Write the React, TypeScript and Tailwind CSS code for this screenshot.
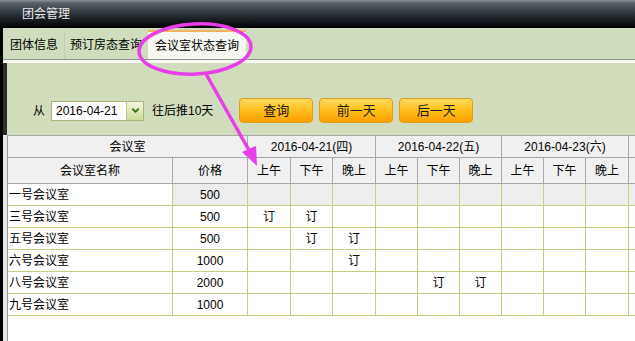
import { ChevronDown } from "lucide-react";

const cols = "grid-cols-[165px_75px_43px_42px_43px_42px_42px_42px_42px_42px_43px_60px]";

interface Sala {
  nome: string;
  preco: string;
  ocupado: number[];
}

const salas: Sala[] = [
  { nome: "一号会议室", preco: "500", ocupado: [] },
  { nome: "三号会议室", preco: "500", ocupado: [0, 1] },
  { nome: "五号会议室", preco: "500", ocupado: [1, 2] },
  { nome: "六号会议室", preco: "1000", ocupado: [2] },
  { nome: "八号会议室", preco: "2000", ocupado: [4, 5] },
  { nome: "九号会议室", preco: "1000", ocupado: [] },
];

const periodos = ["上午", "下午", "晚上", "上午", "下午", "晚上", "上午", "下午", "晚上"];

function Botao({ texto }: { texto: string }) {
  return (
    <button className="w-[74px] h-[25px] shrink-0 rounded-[4px] border border-[#e49a22] bg-[linear-gradient(to_bottom,#ffdc60_0%,#ffc21e_45%,#ff9f00_100%)] text-[13px] text-[#1a1a1a] flex items-center justify-center">
      {texto}
    </button>
  );
}

function App() {
  return (
    <div className="relative w-[635px] h-[341px] overflow-hidden bg-white text-[12px] text-black font-['Liberation_Sans','Noto_Sans_CJK_SC',sans-serif]">
      {/* barra de título */}
      <div className="h-[28px] flex items-center pl-[22px] bg-[linear-gradient(to_bottom,#8a8e96_0px,#5a6068_3px,#2a323a_14px,#000_28px)] text-[#e8e8e8] text-[12px]">
        团会管理
      </div>

      <div className="flex h-[313px]">
        <div className="w-[3px] shrink-0 bg-black" />
        <div className="flex-1 min-w-0 flex flex-col">
          {/* abas */}
          <div className="h-[32px] bg-[#cfdcbd] flex items-end border-b border-[#8e9488]">
            <div className="h-[28px] w-[62px] shrink-0 flex items-center pl-[7px] border-r border-[#c2ceb0]">团体信息</div>
            <div className="h-[28px] w-[80px] shrink-0 flex items-center pl-[5px]">预订房态查询</div>
            <div className="h-[29px] w-[98px] shrink-0 ml-[3px] flex items-center justify-center bg-[#f7f8f1] border-t-2 border-[#f2b45a]">
              会议室状态查询
            </div>
          </div>
          <div className="h-[3px] bg-[#f8f9f4]" />

          {/* filtro */}
          <div className="h-[72px] shrink-0 bg-[#d0dcbc] flex border-l-[4px] border-[#2c2c2c]">
            <div className="flex items-center h-full pl-[26px] pt-[23px]">
              <span className="text-[12px]">从</span>
              <div className="flex h-[20px] border border-[#aab47a] bg-white ml-[6px]">
                <div className="w-[74px] pl-[4px] flex items-center text-[12px]">2016-04-21</div>
                <div className="w-[17px] flex items-center justify-center bg-[linear-gradient(to_bottom,#f2f6de,#cddb98)] border-l border-[#b8c48a]">
                  <ChevronDown size={11} strokeWidth={4} color="#3d6a12" />
                </div>
              </div>
              <span className="ml-[8px] text-[12px]">往后推10天</span>
              <div className="flex gap-[6px] ml-[26px]">
                <Botao texto="查询" />
                <Botao texto="前一天" />
                <Botao texto="后一天" />
              </div>
            </div>
          </div>

          {/* tabela */}
          <div className="flex-1 flex bg-white">
            <div className="w-[5px] shrink-0 bg-[#e6e6e6] border-r border-[#9a9a9a]" />
            <div className="flex-1 min-w-0 overflow-hidden">
              <div className={`grid ${cols} w-[681px] bg-[#f0f0f0] border-t border-[#a8a8a8]`}>
                <div className="col-span-2 h-[22px] flex items-center justify-center border-r border-b border-[#a8a8a8]">会议室</div>
                <div className="col-span-3 h-[22px] flex items-center justify-center border-r border-b border-[#a8a8a8]">2016-04-21(四)</div>
                <div className="col-span-3 h-[22px] flex items-center justify-center border-r border-b border-[#a8a8a8]">2016-04-22(五)</div>
                <div className="col-span-3 h-[22px] flex items-center justify-center border-r border-b border-[#a8a8a8]">2016-04-23(六)</div>
                <div className="h-[22px] border-b border-[#a8a8a8]" />

                <div className="h-[26px] flex items-center justify-center border-r border-b border-[#a8a8a8]">会议室名称</div>
                <div className="h-[26px] flex items-center justify-center border-r border-b border-[#a8a8a8]">价格</div>
                {periodos.map((p, i) => (
                  <div key={i} className="h-[26px] flex items-center justify-center border-r border-b border-[#a8a8a8]">
                    {p}
                  </div>
                ))}
                <div className="h-[26px] border-b border-[#a8a8a8]" />
              </div>

              {salas.map((s, r) => (
                <div key={r} className={`grid ${cols} w-[681px] ${r === 0 ? "bg-[#ededed]" : "bg-white"}`}>
                  <div className="h-[22px] flex items-center pl-[1px] border-r border-b border-[#c6ce84] bg-white">{s.nome}</div>
                  <div className="h-[22px] flex items-center justify-center border-r border-b border-[#c6ce84]">{s.preco}</div>
                  {periodos.map((_, i) => (
                    <div key={i} className="h-[22px] flex items-center justify-center border-r border-b border-[#c6ce84]">
                      {s.ocupado.includes(i) ? "订" : ""}
                    </div>
                  ))}
                  <div className="h-[22px] border-b border-[#c6ce84]" />
                </div>
              ))}
            </div>
          </div>
        </div>
      </div>

      {/* anotação */}
      <svg className="absolute inset-0 pointer-events-none" width="635" height="341">
        <ellipse cx="195" cy="49" rx="56" ry="25" fill="none" stroke="#e83ee8" strokeWidth="3.5" transform="rotate(-3 195 49)" />
        <line x1="206" y1="74" x2="250" y2="152" stroke="#e83ee8" strokeWidth="3.5" />
        <polygon points="257,166 242,152 256,146" fill="#e83ee8" />
      </svg>
    </div>
  );
}

export default App;
